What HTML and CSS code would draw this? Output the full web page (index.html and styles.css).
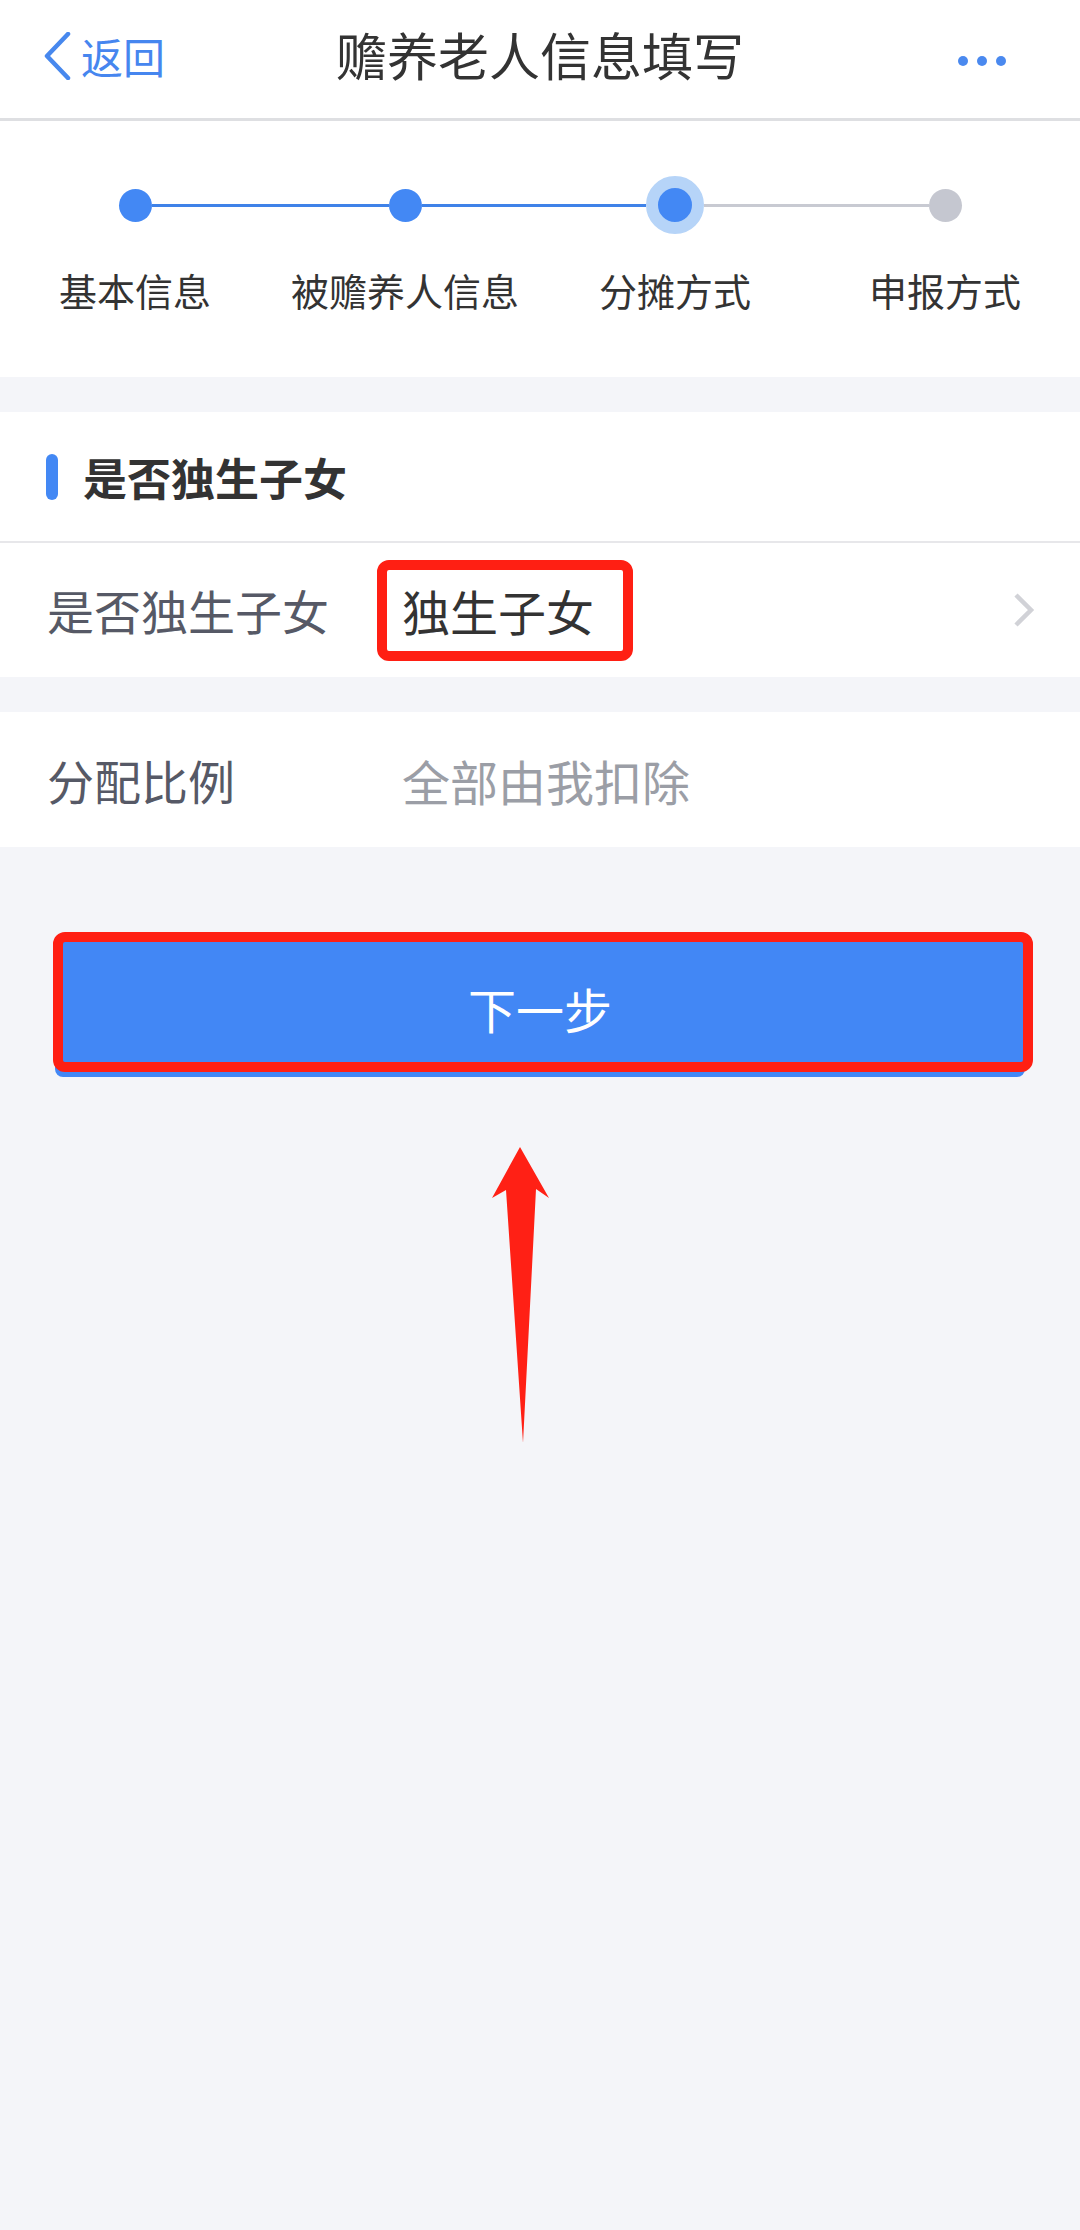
FILE: index.html
```html
<!DOCTYPE html>
<html lang="zh-CN">
<head>
<meta charset="utf-8">
<title>赡养老人信息填写</title>
<link rel="stylesheet" href="styles.css">
</head>
<body>
<div class="page">
  <header class="nav">
    <div class="nav-left">
      <svg class="back-icon" width="30" height="48" viewBox="0 0 30 48"><path d="M25 2 L4 24 L25 46" fill="none" stroke="#4788ee" stroke-width="4.5" stroke-linecap="round" stroke-linejoin="round"/></svg>
      <span class="back-text">返回</span>
    </div>
    <div class="nav-title">赡养老人信息填写</div>
    <div class="nav-right">
      <span class="mdot"></span><span class="mdot"></span><span class="mdot"></span>
    </div>
  </header>

  <section class="steps">
    <div class="step">
      <div class="track"><span class="seg none"></span><span class="dot"></span><span class="seg blue"></span></div>
      <div class="step-label">基本信息</div>
    </div>
    <div class="step">
      <div class="track"><span class="seg blue"></span><span class="dot"></span><span class="seg blue"></span></div>
      <div class="step-label">被赡养人信息</div>
    </div>
    <div class="step">
      <div class="track"><span class="seg blue"></span><span class="dot active"></span><span class="seg grey"></span></div>
      <div class="step-label">分摊方式</div>
    </div>
    <div class="step">
      <div class="track"><span class="seg grey"></span><span class="dot grey"></span><span class="seg none"></span></div>
      <div class="step-label">申报方式</div>
    </div>
  </section>

  <section class="card">
    <div class="card-head"><span class="head-bar"></span><span class="head-text">是否独生子女</span></div>
    <div class="row">
      <span class="row-label">是否独生子女</span>
      <span class="row-value"><span class="marked">独生子女</span></span>
      <svg class="chev" width="22" height="34" viewBox="0 0 22 34"><path d="M3 2 L18 17 L3 32" fill="none" stroke="#d1d2d7" stroke-width="4.5"/></svg>
    </div>
  </section>

  <section class="card second">
    <div class="row">
      <span class="row-label">分配比例</span>
      <span class="row-value placeholder">全部由我扣除</span>
    </div>
  </section>

  <div class="btn-wrap">
    <button class="next-btn" type="button">下一步</button>
  </div>

  <svg class="arrow" width="80" height="310" viewBox="480 1140 80 310">
    <polygon points="520,1147 549,1198 536,1189 523,1443 506,1190 492,1198" fill="#ff2015"/>
  </svg>
</div>
</body>
</html>
```

FILE: styles.css
```css
* { box-sizing: border-box; }
html, body { margin: 0; padding: 0; }
body {
  background: #f4f5f9;
  font-family: "Noto Sans CJK SC", "Noto Sans", sans-serif;
  color: #333;
}
.page {
  position: relative;
  min-height: 2230px;
}

/* nav */
.nav {
  height: 121px;
  background: #fff;
  border-bottom: 3px solid #dedfe2;
  display: grid;
  grid-template-columns: 1fr auto 1fr;
  align-items: center;
  padding: 0 0 10px 0;
}
.nav-left {
  display: flex;
  align-items: center;
  gap: 8px;
  padding-left: 43px;
  padding-top: 3px;
}
.back-icon { display: block; }
.back-text {
  font-size: 42px;
  line-height: 1;
  color: #4686ef;
}
.nav-title {
  font-size: 51px;
  line-height: 1;
  color: #333;
}
.nav-right {
  display: flex;
  justify-content: flex-end;
  gap: 9px;
  padding-right: 74px;
  padding-top: 14px;
}
.mdot {
  width: 10px;
  height: 10px;
  border-radius: 50%;
  background: #4a89ef;
}

/* steps */
.steps {
  background: #fff;
  display: grid;
  grid-template-columns: repeat(4, 1fr);
  padding: 55px 0 64px;
  margin-bottom: 35px;
}
.step {
  display: flex;
  flex-direction: column;
  align-items: stretch;
}
.track {
  height: 58px;
  display: flex;
  align-items: center;
}
.seg {
  flex: 1;
  height: 3px;
}
.seg.blue { background: #3f82e8; }
.seg.grey { background: #c8cad2; }
.seg.none { background: transparent; }
.dot {
  width: 33px;
  height: 33px;
  border-radius: 50%;
  background: #4388f4;
  flex: none;
}
.dot.active {
  width: 58px;
  height: 58px;
  border: 12.5px solid #b6d4f8;
}
.dot.grey { background: #c5c7d0; }
.step-label {
  margin-top: 33px;
  text-align: center;
  font-size: 38px;
  line-height: 46px;
  color: #333;
}

/* cards */
.card {
  background: #fff;
  margin-bottom: 35px;
}
.card-head {
  height: 131px;
  display: flex;
  align-items: center;
  padding-left: 46px;
  border-bottom: 2px solid #e7e7ea;
}
.head-bar {
  width: 12px;
  height: 46px;
  border-radius: 6px;
  background: #4388f4;
  margin-right: 25px;
}
.head-text {
  font-size: 44px;
  font-weight: 700;
  color: #333;
  line-height: 1;
}
.row {
  height: 134px;
  display: flex;
  align-items: center;
  padding: 0 45px 0 47px;
}
.card.second .row { height: 135px; }
.row-label {
  width: 355px;
  flex: none;
  font-size: 47px;
  line-height: 48px;
  color: #565966;
}
.row-value {
  flex: 1;
  font-size: 48px;
  line-height: 48px;
  color: #333;
}
.row-value.placeholder { color: #9b9ea6; }
.chev { display: block; flex: none; }

/* annotation box */
.marked {
  position: relative;
  display: inline-block;
}
.marked::after {
  content: "";
  position: absolute;
  top: -26px;
  bottom: -27px;
  left: -25px;
  right: -39px;
  border: 10px solid #ff1f13;
  border-radius: 12px;
}

/* button */
.btn-wrap {
  padding: 57px 55px 0;
}
.next-btn {
  position: relative;
  display: block;
  width: 100%;
  height: 138px;
  border: none;
  border-radius: 8px;
  background: #4287f5;
  color: #fff;
  font-family: "Noto Sans CJK SC", "Noto Sans", sans-serif;
  font-size: 48px;
  line-height: 1;
  padding: 0;
}
.next-btn::after {
  content: "";
  position: absolute;
  top: -7px;
  bottom: 5px;
  left: -2px;
  right: -8px;
  border: 10px solid #ff1f13;
  border-radius: 12px;
}

/* arrow overlay */
.arrow {
  position: absolute;
  left: 480px;
  top: 1140px;
}
```
